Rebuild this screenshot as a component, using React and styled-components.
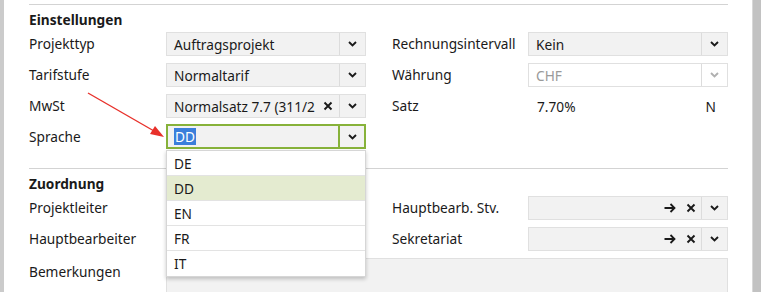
import React from "react";
import styled, { createGlobalStyle, css } from "styled-components";

const Global = createGlobalStyle`
  html, body { margin: 0; padding: 0; background: #fff; }
  body {
    font-family: "Noto Sans", "Open Sans", Arial, sans-serif;
    font-size: 13.7px;
    color: #1a1a1a;
    width: 761px;
    height: 292px;
    overflow: hidden;
  }
`;

const Page = styled.div`
  display: flex;
  width: 761px;
  height: 292px;
  position: relative;
  overflow: hidden;
`;

const EdgeBar = styled.div`
  flex: 0 0 4px;
  background: #cbcbcb;
`;

const ScrollBar = styled.div`
  flex: 0 0 8px;
  background: #c2c2c2;
  border-left: 1px solid #d8d8d8;
`;

const Content = styled.div`
  flex: 1;
  padding: 4px 24px 0 25px;
`;

const Section = styled.section`
  border-top: 1px solid #d3d3d3;
  padding-top: 6px;
  & + & { margin-top: 19px; }
`;

const Title = styled.div`
  font-weight: 700;
  line-height: 18px;
  height: 18px;
  margin-bottom: 3px;
`;

const Grid = styled.div`
  display: grid;
  grid-template-columns: 137px 200px 26px 136px 200px;
  grid-auto-rows: 24px;
  row-gap: 7px;
  align-items: center;
`;

const Label = styled.div`
  grid-column: ${(p) => (p.$right ? 4 : 1)};
  line-height: 24px;
  white-space: nowrap;
  align-self: ${(p) => (p.$top ? "start" : "center")};
  padding-top: ${(p) => (p.$top ? 2 : 0)}px;
`;

const Field = styled.div`
  grid-column: ${(p) => (p.$right ? 5 : 2)};
  position: relative;
  height: 24px;
`;

const SelectBox = styled.div`
  box-sizing: border-box;
  height: 24px;
  display: flex;
  align-items: stretch;
  background: ${(p) => (p.$disabled ? "#fff" : "#f2f2f2")};
  border: 1px solid #e0e0e0;
  color: ${(p) => (p.$disabled ? "#9a9a9a" : "#1a1a1a")};
  ${(p) =>
    p.$focused &&
    css`
      border: 2px solid #87b23a;
      height: 25px;
      margin-top: -1px;
    `}
`;

const Value = styled.div`
  flex: 1;
  min-width: 0;
  padding-left: ${(p) => (p.$focused ? 6 : 7)}px;
  display: flex;
  align-items: center;
  white-space: nowrap;
  overflow: hidden;
`;

const Selected = styled.span`
  background: #3b7fdb;
  color: #fff;
  line-height: 17px;
  padding: 0 1px;
`;

const IconBtn = styled.div`
  flex: 0 0 ${(p) => p.$w || 18}px;
  display: flex;
  align-items: center;
  justify-content: center;
`;

const DropBtn = styled.div`
  flex: 0 0 25px;
  border-left: 1px solid ${(p) => (p.$focused ? "#87b23a" : "#dcdcdc")};
  ${(p) => p.$focused && css`border-left-width: 2px; flex-basis: 24px;`}
  display: flex;
  align-items: center;
  justify-content: center;
`;

const ValueRow = styled.div`
  grid-column: 5;
  display: flex;
  justify-content: space-between;
  padding: 0 12px 0 9px;
`;

const TextArea = styled.div`
  grid-column: 2 / 6;
  box-sizing: border-box;
  height: 40px;
  background: #f2f2f2;
  border: 1px solid #e0e0e0;
  align-self: start;
`;

const Menu = styled.ul`
  position: absolute;
  left: 0;
  top: 25px;
  width: 200px;
  box-sizing: border-box;
  margin: 0;
  padding: 0;
  list-style: none;
  background: #fff;
  border: 1px solid #d6d6d6;
  box-shadow: 0 2px 4px rgba(0, 0, 0, 0.22);
  z-index: 5;
`;

const MenuItem = styled.li`
  height: 25px;
  box-sizing: border-box;
  display: flex;
  align-items: center;
  padding-left: 7px;
  border-bottom: 1px solid #e3e3e3;
  background: ${(p) => (p.$active ? "#e4ebd0" : "#fff")};
  &:last-child { border-bottom: none; }
`;

const Annotation = styled.svg`
  position: absolute;
  left: 0;
  top: 0;
  pointer-events: none;
  z-index: 10;
`;

const Chevron = ({ color = "#1a1a1a" }) => (
  <svg width="9" height="6" viewBox="0 0 9 6">
    <path d="M1 1 L4.5 4.5 L8 1" fill="none" stroke={color} strokeWidth="1.9" />
  </svg>
);

const Cross = () => (
  <svg width="10" height="10" viewBox="0 0 10 10">
    <path d="M1.5 1.5 L8.5 8.5 M8.5 1.5 L1.5 8.5" stroke="#1a1a1a" strokeWidth="1.9" />
  </svg>
);

const Arrow = () => (
  <svg width="12" height="10" viewBox="0 0 12 10">
    <path d="M0.5 5 H10.5 M6.5 1 L10.5 5 L6.5 9" fill="none" stroke="#1a1a1a" strokeWidth="1.8" />
  </svg>
);

const Select = ({ value, disabled, focused, clear, link, selected }) => (
  <SelectBox $disabled={disabled} $focused={focused}>
    <Value $focused={focused}>{selected ? <Selected>{value}</Selected> : value}</Value>
    {link && (
      <IconBtn $w={23}>
        <Arrow />
      </IconBtn>
    )}
    {clear && (
      <IconBtn $w={link ? 20 : 23}>
        <Cross />
      </IconBtn>
    )}
    <DropBtn $focused={focused}>
      <Chevron color={disabled ? "#b0b0b0" : "#1a1a1a"} />
    </DropBtn>
  </SelectBox>
);

const languages = ["DE", "DD", "EN", "FR", "IT"];

export default function App() {
  return (
    <>
      <Global />
      <Page>
        <EdgeBar />
        <Content>
          <Section>
            <Title>Einstellungen</Title>
            <Grid>
              <Label>Projekttyp</Label>
              <Field>
                <Select value="Auftragsprojekt" />
              </Field>
              <Label $right>Rechnungsintervall</Label>
              <Field $right>
                <Select value="Kein" />
              </Field>

              <Label>Tarifstufe</Label>
              <Field>
                <Select value="Normaltarif" />
              </Field>
              <Label $right>Währung</Label>
              <Field $right>
                <Select value="CHF" disabled />
              </Field>

              <Label>MwSt</Label>
              <Field>
                <Select value="Normalsatz 7.7 (311/2" clear />
              </Field>
              <Label $right>Satz</Label>
              <ValueRow>
                <span>7.70%</span>
                <span>N</span>
              </ValueRow>

              <Label>Sprache</Label>
              <Field>
                <Select value="DD" focused selected />
                <Menu>
                  {languages.map((l) => (
                    <MenuItem key={l} $active={l === "DD"}>
                      {l}
                    </MenuItem>
                  ))}
                </Menu>
              </Field>
            </Grid>
          </Section>
          <Section>
            <Title>Zuordnung</Title>
            <Grid>
              <Label>Projektleiter</Label>
              <Field>
                <Select value="" link clear />
              </Field>
              <Label $right>Hauptbearb. Stv.</Label>
              <Field $right>
                <Select value="" link clear />
              </Field>

              <Label>Hauptbearbeiter</Label>
              <Field>
                <Select value="" link clear />
              </Field>
              <Label $right>Sekretariat</Label>
              <Field $right>
                <Select value="" link clear />
              </Field>

              <Label $top>Bemerkungen</Label>
              <TextArea />
            </Grid>
          </Section>
        </Content>
        <ScrollBar />
        <Annotation width="761" height="292">
          <line x1="88" y1="93" x2="154" y2="131" stroke="#e8302a" strokeWidth="1.4" />
          <polygon points="164,137 150,134 155,126" fill="#e8302a" />
        </Annotation>
      </Page>
    </>
  );
}
